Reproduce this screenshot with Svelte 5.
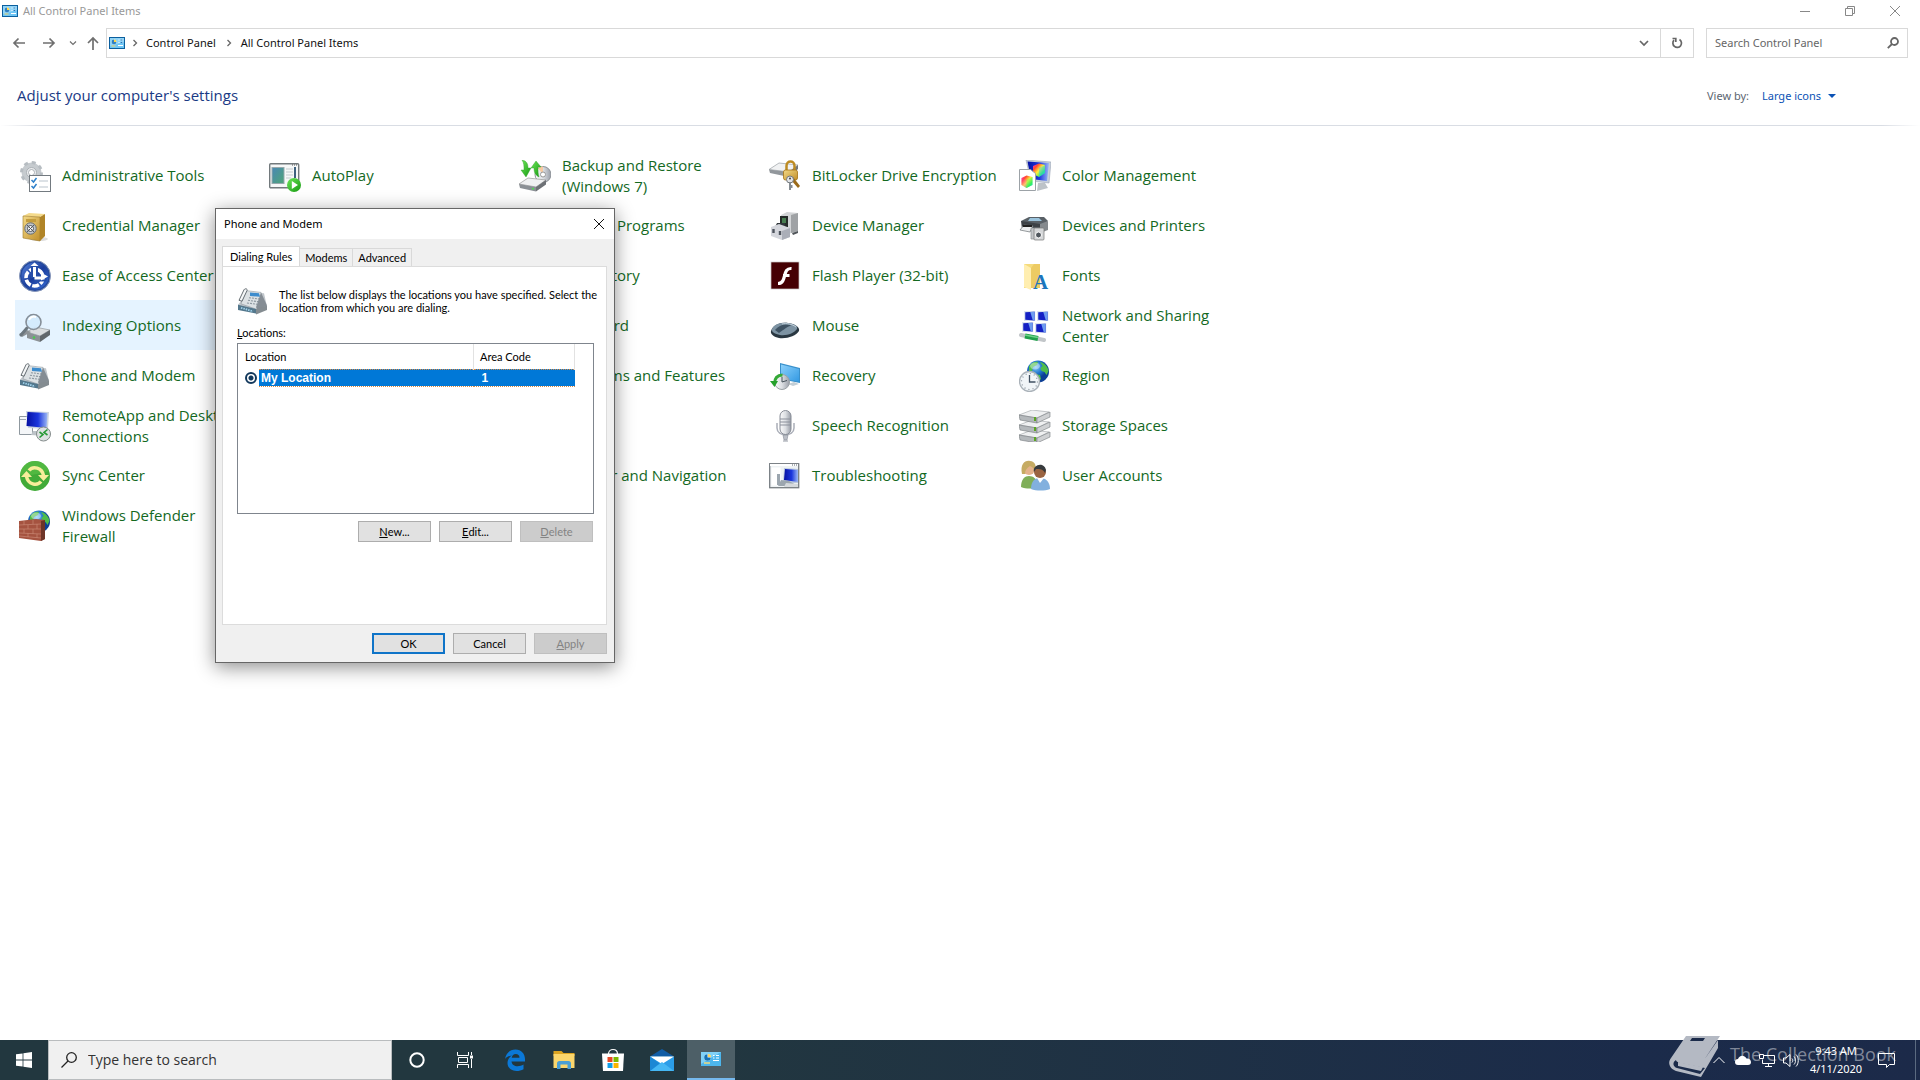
<script>
  const items = [
    ['admin', 'Administrative Tools'], ['autoplay', 'AutoPlay'], ['backup', 'Backup and Restore (Windows 7)'], ['bitlocker', 'BitLocker Drive Encryption'], ['color', 'Color Management'],
    ['safe', 'Credential Manager'], null, ['', 'Default Programs'], ['device', 'Device Manager'], ['printer', 'Devices and Printers'],
    ['ease', 'Ease of Access Center'], null, ['', 'File History'], ['flash', 'Flash Player (32-bit)'], ['fonts', 'Fonts'],
    ['indexing', 'Indexing Options'], null, ['', 'Keyboard'], ['mouse', 'Mouse'], ['network', 'Network and Sharing Center'],
    ['phone', 'Phone and Modem'], null, ['', 'Programs and Features'], ['recovery', 'Recovery'], ['region', 'Region'],
    ['remote', 'RemoteApp and Desktop Connections'], null, null, ['mic', 'Speech Recognition'], ['storage', 'Storage Spaces'],
    ['sync', 'Sync Center'], null, ['', 'Taskbar and Navigation'], ['trouble', 'Troubleshooting'], ['users', 'User Accounts'],
    ['firewall', 'Windows Defender Firewall']
  ];
  const hovered = 'Indexing Options';
</script>

{#snippet panelIcon()}
  <svg class="panel-icon" viewBox="0 0 16 12" aria-hidden="true">
    <rect x=".5" y=".5" width="15" height="11" fill="#6fc6f5" stroke="#0b5f9e" />
    <path d="M1 1h14v4L1 9z" fill="#a5def9" opacity=".6" />
    <circle cx="5" cy="5" r="2.4" fill="#fff" /><path d="M5 5V2.600a2.400 2.400 0 1 0 2.400 2.400z" fill="#2f80c2" /><path d="M5 5V2.600A2.400 2.400 0 0 1 7.400 5z" fill="#ffd54a" />
    <path d="M9.500 3h1M11.500 3h2.500M9.500 5.500h1M11.500 5.500h2.500M9 8.500h5" stroke="#fff" />
    <path d="M11.500 3h2M11.500 5.500h2" stroke="#1f74ba" /><path d="M2.500 9h4" stroke="#f4d269" />
  </svg>
{/snippet}

{#snippet globe()}
  <circle cx="20" cy="11.500" r="11" fill="url(#globe)" />
  <path d="M11 6c3-4 7-5 9-4l-1 3-4 2-1 4-3 1zM22 2c5 1 8 5 8.500 9l-2 4-2-3-3-1-1-3 2-2zM17 14l5 1 1 4-3 3-3-3z" fill="#4fbd4b" />
  <ellipse cx="17" cy="6" rx="5" ry="3.500" fill="#fff" opacity=".4" />
{/snippet}

{#snippet screen()}
  <path d="M0 0h9v8H0z" fill="#dbe3ef" /><path d="M1 1l7.500-.5v7L1 7z" fill="#1420c4" /><path d="M5 .8l3.500-.3v7L7 7.400z" fill="#6e9cf0" />
{/snippet}

{#snippet art(name)}
  <svg class="art" viewBox="0 0 32 32" aria-hidden="true">
    {#if name === 'admin'}
      <circle cx="12.500" cy="12.500" r="7.500" fill="none" stroke="#c6cbcf" stroke-width="5" />
      <circle cx="12.500" cy="12.500" r="10" fill="none" stroke="#b7bdc2" stroke-width="3" stroke-dasharray="3.900 3.950" />
      <circle cx="12.500" cy="12.500" r="5" fill="#eceef0" stroke="#9aa1a6" stroke-width=".8" /><circle cx="12.500" cy="12.500" r="3" fill="#fff" stroke="#9aa1a6" stroke-width=".8" />
      <rect x="10.500" y="15.500" width="21" height="16" fill="#fff" stroke="#737a80" />
      <path d="M12.500 20l2 2 3-4M12.500 26l2 2 3-4" fill="none" stroke="#2e80ca" stroke-width="1.500" />
      <path d="M20 21h9M20 27h9" stroke="#b9c3cc" />
    {:else if name === 'autoplay'}
      <rect x=".7" y="3.700" width="29" height="24" rx="1" fill="#f6f8f8" stroke="#72797c" stroke-width="1.400" />
      <rect x="3" y="7.500" width="12" height="16" fill="url(#photo)" stroke="#97a9ad" />
      <path d="M17 9h7M17 12h7M17 15h7M17 18h5" stroke="#c4cacd" /><path d="M26 7v11" stroke="#3e617e" stroke-width="2" /><path d="M23 5h5" stroke="#555" stroke-dasharray="1 1" />
      <circle cx="25" cy="25" r="7" fill="url(#green)" /><path d="M22.800 21v8l6.200-4z" fill="#fff" />
    {:else if name === 'backup'}
      <circle cx="24" cy="14.500" r="8" fill="url(#metal)" stroke="#8d9297" /><path d="M24 14.500l-5-6.500a8 8 0 0 1 5-1.500z" fill="#f7c9a0" /><circle cx="24" cy="14.500" r="2.500" fill="#fff" stroke="#999" />
      <path d="M0 24l9-6 18 2-10 7z" fill="#f0f1f2" stroke="#999" stroke-width=".7" /><path d="M0 24l17 3v4.500L1 28z" fill="#8b9095" /><path d="M17 27l10-7v4.500l-10 7z" fill="#6e7276" /><circle cx="14" cy="28.800" r="1" fill="#49e34d" />
      <path d="M3 0c5 1 6 4 6 8h3l-5 9-5-7h3c0-4 0-7-2-10z" fill="url(#green)" stroke="#2a9d25" stroke-width=".4" /><path d="M20 17c-4-2-5-5-5-9h-3l5-7 5 6h-3c0 4 0 7 1 10z" fill="url(#green)" stroke="#2a9d25" stroke-width=".4" />
    {:else if name === 'bitlocker'}
      <path d="M0 9.500L10 3l19 2-9 7z" fill="#f1f2f3" stroke="#9a9fa4" stroke-width=".7" /><path d="M0 9.500L20 12v5L1 13z" fill="#92979c" /><path d="M20 12l9-7v4l-9 8z" fill="#72777b" />
      <path d="M17.500 11V6c0-6 8-6 8 0v5" fill="none" stroke="#bd8b22" stroke-width="2.500" />
      <rect x="14.500" y="10" width="14" height="10" rx="2" fill="url(#gold)" stroke="#a67417" stroke-width=".8" />
      <path d="M24 17l7 9-2 2-7-8z" fill="#9b6b1b" /><circle cx="21" cy="19.500" r="3.500" fill="#e3e5e8" stroke="#74797d" /><path d="M21 22v8M22.500 25v3" stroke="#858b91" stroke-width="2" /><circle cx="21" cy="18.500" r="1" fill="#444" />
    {:else if name === 'color'}
      <path d="M7 0l25 2-2 21-18-2z" fill="#c8d0dc" stroke="#9aa5b5" stroke-width=".6" /><path d="M8.500 1.500L30 3l-2 18-16-2z" fill="url(#blue)" />
      <path d="M19 23h7l3 5-11 3z" fill="#bdc3c8" />
      <path d="M14 6l6-2.500L26 5v8l-6 4-6-3z" fill="url(#rainbow)" /><path d="M20 8l6-3v8l-6 4z" fill="#19c7ff" opacity=".4" />
      <path d="M.5 9.500h11l5 4v17H.5z" fill="#fff" stroke="#9ca2a7" /><path d="M2.500 18l5-2.500 6 1.500v8l-6 3-5-3z" fill="url(#rainbow)" /><path d="M2.500 18l5 2v8l-5-3z" fill="#f3f" opacity=".25" /><path d="M7.500 20l6-3v8l-6 3z" fill="#2f6" opacity=".3" />
    {:else if name === 'safe'}
      <ellipse cx="20" cy="29" rx="9" ry="2" fill="#ddd" /><path d="M4 6l6-3 16 1-5 3z" fill="#f4da8b" /><path d="M4 6l17 1v24L4 28z" fill="url(#gold)" stroke="#9c7929" stroke-width=".6" /><path d="M21 7l5-3v22l-5 5z" fill="#b08427" />
      <path d="M7 9h10v3H7z" fill="#c49d3d" /><circle cx="11.500" cy="18.500" r="5.700" fill="#c2c6ca" stroke="#656a6f" /><circle cx="11.500" cy="18.500" r="3" fill="#f4f4f5" stroke="#4d5257" /><path d="M8 22l7-7M8 15l7 7" stroke="#555b60" />
    {:else if name === 'ease'}
      <circle cx="16" cy="16" r="15.500" fill="#23499f" stroke="#8897b8" /><circle cx="16" cy="16" r="13.500" fill="url(#blue2)" />
      <circle cx="15.500" cy="17.500" r="8.500" fill="none" stroke="#fff" stroke-width="3.500" stroke-dasharray="7 1.600" />
      <path d="M15.500 18V6M15.500 18h12" stroke="#264ea9" stroke-width="7" /><path d="M15.500 17V7M15.500 18h10" stroke="#fff" stroke-width="3" /><path d="M22 12.500v8l7-4z" fill="#fff" /><path d="M11.500 6h8l-4-3.500z" fill="#fff" />
    {:else if name === 'flash'}
      <rect x="2" y="2" width="28" height="27" fill="#450003" stroke="#c9c9c9" stroke-width=".7" /><path d="M22.500 8.500c-7-.5-6 7-8.500 12-1 2-3 3-5 3M14 15.500h6.500" fill="none" stroke="#fff" stroke-width="3.200" />
    {:else if name === 'device'}
      <path d="M12 5l6-3 11 1v18l-10 3-8-3z" fill="#d2d4d6" /><path d="M22 5l7-2v18l-7 2z" fill="#9fa2a5" /><path d="M11 6h8v11h-8z" fill="#242b28" /><rect x="13" y="8" width="4" height="5" fill="#477d50" /><path d="M8 13h8v4H6z" fill="#30363b" />
      <path d="M2 17l8-3 11 4v9l-8 3-11-4z" fill="#d4d6dc" /><path d="M13 21l8-3v9l-8 3z" fill="#aaaeb8" /><path d="M4.500 19v4M11 21v4" stroke="#4d535c" stroke-width="2.400" /><path d="M23 23l6-2v2l-5 2z" fill="#50555a" />
    {:else if name === 'printer'}
      <path d="M2 11l8-4h15l4 4-5 4H5z" fill="#596066" /><path d="M11 8h9l3 3H9z" fill="#9bc4dd" /><path d="M2 11l19 3v9L3 19z" fill="#3d4247" /><path d="M21 14l8-3v9l-8 3z" fill="#858a8e" />
      <path d="M5 15l9 1-3 6-10-2z" fill="#eceeef" stroke="#6d7276" stroke-width=".7" /><path d="M4 16h9" stroke="#222" stroke-width="2" />
      <path d="M12 18h9v11h-9z" fill="#c3c6c9" stroke="#8a8f93" stroke-width=".7" /><rect x="15" y="18" width="10" height="12" rx="1" fill="#d5d7d9" stroke="#777" stroke-width=".7" /><circle cx="19.500" cy="25" r="3" fill="#50575e" stroke="#fff" />
    {:else if name === 'fonts'}
      <path d="M5 4h16v24H5z" fill="#f5db7c" /><path d="M5 4l7 4v22l-7-3z" fill="#ffeeb0" /><path d="M12 8l3-4h6v24h-9z" fill="#edcb63" />
      <text x="14" y="29" font-family="Liberation Serif, serif" font-size="21" font-weight="700" fill="#1c76bd">A</text>
    {:else if name === 'indexing'}
      <path d="M8 22l8-5 15 3-10 6z" fill="#dadddf" stroke="#888d91" stroke-width=".6" /><path d="M8 22l13 4v6L8 28z" fill="#8c9296" /><path d="M21 26l10-6v5l-10 7z" fill="#61676b" /><circle cx="15" cy="27.500" r="1.200" fill="#47ce4c" /><path d="M0 24l8-4 4 2-9 5z" fill="#8d9296" />
      <path d="M8 18l-6 7" stroke="#6c777f" stroke-width="3" stroke-linecap="round" /><circle cx="14.500" cy="12" r="7.500" fill="#d2eafd" fill-opacity=".9" stroke="#858e98" stroke-width="1.600" /><path d="M10 10c1-3 4-4 7-3" fill="none" stroke="#fff" stroke-width="2" />
    {:else if name === 'mouse'}
      <path d="M2 21c2-6 9-9 17-8 7 1 12 4 11 8-3 5-12 8-20 7-5-1-9-4-8-7z" fill="#293741" /><path d="M3 19c2-5 9-7 16-6 7 1 10 3 9 6-3 4-10 7-17 6-5-1-9-3-8-6z" fill="#7d93a3" /><path d="M6 20c4-5 11-7 17-4-3-1-8 4-13 7z" fill="#3f5363" /><path d="M13 14c5-1 10 0 14 3" stroke="#c4d2dc" fill="none" />
    {:else if name === 'network'}
      <g transform="translate(5 1) scale(1.250)">{@render screen()}</g><g transform="translate(18 1) scale(1.250)">{@render screen()}</g><g transform="translate(3 12) scale(1.250)">{@render screen()}</g><g transform="translate(16 13) scale(1.250)">{@render screen()}</g>
      <path d="M2 25l23 5" stroke="#c2c6c9" stroke-width="4" stroke-linecap="round" /><path d="M6 26l13 2.500" stroke="#1fa04a" stroke-width="5" /><path d="M6 25l13 2.500" stroke="#6ed487" stroke-width="1.500" />
    {:else if name === 'phone'}
      <g transform="translate(0 3) scale(1 .88)">
        <path d="M1 19L11 5l16 1 3 15-11 7-17-4z" fill="#bfc5ca" /><path d="M9 3l15 2 2 15-7 4-15-6z" fill="#dce1e4" stroke="#8f989f" stroke-width=".6" /><path d="M24 5l6 15-9 5-2-3z" fill="#858d94" />
        <path d="M1 19l18 5v5L1 25z" fill="#53778c" /><path d="M19 24l11-4v5l-11 5z" fill="#848c91" /><path d="M13 5l9 1 1 4-10-1z" fill="#3d8ccd" /><path d="M12 11l10 1.500M11 14l10 1.500M10 17l10 1.500" stroke="#8a959d" stroke-width="1.200" stroke-dasharray="2 1" />
        <path d="M2 14L7 2c1-2 4-1 3 1L5 15z" fill="#f5f7f8" stroke="#4b5359" stroke-width=".9" /><path d="M4 22.500l12 4" stroke="#a1d3ed" stroke-width="2" stroke-dasharray="1.500 1" />
      </g>
    {:else if name === 'recovery'}
      <path d="M11 3l20 5v15l-20-4z" fill="#3990cb" /><path d="M12 4.500L30 9v12.500l-18-3z" fill="url(#sky)" /><path d="M19 24l6-2 5 2-6 2z" fill="#c2ced6" />
      <circle cx="13" cy="22" r="7.500" fill="url(#metal)" stroke="#9ba2a6" /><path d="M13 17v5l5-1.500" fill="none" stroke="#445058" /><path d="M5.500 24c0-6 3-9 8-9" fill="none" stroke="#35a937" stroke-width="3" /><path d="M1 21h8l-3.500 6z" fill="#26a12c" />
    {:else if name === 'region'}
      <g transform="translate(-1 0)">{@render globe()}</g><circle cx="10.500" cy="21.500" r="10" fill="#f1f5f8" stroke="#aab2b9" stroke-width="1.300" /><circle cx="10.500" cy="21.500" r="8" fill="none" stroke="#858f98" stroke-width="1.200" stroke-dasharray="1 3.190" /><path d="M10.500 15v7h6" fill="none" stroke="#405061" stroke-width="1.300" />
    {:else if name === 'remote'}
      <path d="M.5 6.500h13v18H.5z" fill="#f4f6f8" stroke="#8f989f" /><path d="M1 9.500h6" stroke="#9ea8b2" />
      <path d="M7 1l23 1-1 17-20-1z" fill="#cbd4df" /><path d="M8.500 2l20 1-1 15-20-2z" fill="url(#blue)" /><path d="M14 21h9l3 5-14-1z" fill="#bdc3c8" />
      <circle cx="24.500" cy="24" r="7" fill="#dde2e2" stroke="#848b8b" /><path d="M20.500 22l3.500 2.500-3.500 3M28.500 19.500L25 22.500l3.500 2.500" fill="none" stroke="#279936" stroke-width="1.600" />
    {:else if name === 'mic'}
      <path d="M8 13v5c0 9 17 9 17 0v-5" fill="none" stroke="#aaaeb8" stroke-width="1.500" /><rect x="11" y=".5" width="11" height="24" rx="5.500" fill="url(#metal)" stroke="#888d97" /><path d="M11 9h11M11 12h11M11 15h11" stroke="#8b909b" /><path d="M14 25l1 5h3l1-5z" fill="#bbbfc7" stroke="#858a95" stroke-width=".6" /><path d="M14 31h5" stroke="#969ba5" />
    {:else if name === 'storage'}
      {#each [22, 12, 2] as y}
        <path d="M0 {y + 3}l13-5 17 2-12 6z" fill="#eff0f1" stroke="#9b9fa3" stroke-width=".6" /><path d="M0 {y + 3}l18 3v5L1 {y + 8}z" fill="#b4b8bb" stroke="#777c80" stroke-width=".6" /><path d="M18 {y + 6}l13-6v5l-13 6z" fill="#cfd1d3" stroke="#777c80" stroke-width=".6" /><rect x="15" y={y + 5} width="2" height="4" fill="#5ba621" />
      {/each}
    {:else if name === 'sync'}
      <circle cx="16" cy="16" r="15" fill="#41ab38" /><path d="M16 1a15 15 0 0 1 14 10C20 14 10 16 1 15A15 15 0 0 1 16 1z" fill="#5cc247" opacity=".6" />
      <path d="M10 10.500c4-5 13-3 14.500 5M22 21.500c-4 5-13 3-14.500-5" fill="none" stroke="#f7ed9a" stroke-width="3.500" />
      <path d="M2 17h11l-5.500-6zM19 15h11l-5.500 6z" fill="#f7ed9a" />
    {:else if name === 'trouble'}
      <rect x=".7" y="3.700" width="29" height="24" fill="#eef2f4" stroke="#777d82" stroke-width="1.300" /><path d="M1 5h28" stroke="#fff" stroke-width="2" /><path d="M23 5h6" stroke="#59636a" stroke-dasharray="1 1" /><rect x="2.500" y="7.500" width="9" height="18" fill="#fff" />
      <path d="M15 8l14 1v14H14z" fill="#b9c7dd" /><path d="M16 9l13 1v12l-14-2z" fill="url(#blue)" /><path d="M8 14h3v11H8zM12 20l8 1 9 5H9z" fill="#9ca6af" /><path d="M17 23l12 1v3H15z" fill="#d5d9dc" />
    {:else if name === 'users'}
      <path d="M2 27c0-8 4-11 8-11s9 3 9 11c-5 2-12 2-17 0z" fill="#7fae58" /><circle cx="10" cy="9" r="6" fill="#e4b28b" /><path d="M3 14C1 4 6 0 11 1c5 0 7 5 5 11-1-3-2-5-5-6-3 2-5 4-5 8z" fill="#c6ab63" />
      <path d="M12 29c0-8 4-11 9-11s10 3 10 11c-5 2-14 2-19 0z" fill="#82b0de" /><path d="M18 18l3 5 4-5z" fill="#fff" /><circle cx="21" cy="12" r="6" fill="#9a6442" /><path d="M15 12c-2-7 10-11 12-2l-1 3c-2-4-5-4-9-4z" fill="#373a3d" />
    {:else if name === 'firewall'}
      {@render globe()}<path d="M0 11l17-2 9 1v19l-4 2L0 28z" fill="#a55340" /><path d="M22 11l4-1v19l-4 2z" fill="#6e3528" /><path d="M0 15l22-1M0 19h22M0 23l22 1M0 26l22 2M5 11v4M14 10v4M9 15v4M18 14v5M5 19v4M14 19v5M9 23v4M18 24v4" stroke="#c98774" stroke-width=".7" />
    {/if}
  </svg>
{/snippet}

<svg class="defs" aria-hidden="true">
  <defs>
    <linearGradient id="green" x2="1" y2="1"><stop stop-color="#6ee55a" /><stop offset="1" stop-color="#14990f" /></linearGradient>
    <linearGradient id="gold" x2="1" y2="1"><stop stop-color="#f3d986" /><stop offset="1" stop-color="#c18f2b" /></linearGradient>
    <linearGradient id="metal" x2="1"><stop stop-color="#fafafb" /><stop offset=".5" stop-color="#dcdfe3" /><stop offset="1" stop-color="#989da7" /></linearGradient>
    <linearGradient id="photo" y2="1"><stop stop-color="#4a87b5" /><stop offset="1" stop-color="#4ea577" /></linearGradient>
    <linearGradient id="blue" x2="1"><stop stop-color="#0510a2" /><stop offset=".55" stop-color="#1c37dd" /><stop offset="1" stop-color="#9db9f5" /></linearGradient>
    <linearGradient id="blue2" y2="1"><stop stop-color="#5683dc" /><stop offset=".5" stop-color="#1a3d9c" /><stop offset="1" stop-color="#3a6fd6" /></linearGradient>
    <linearGradient id="sky" x2="1" y2="1"><stop stop-color="#8bd0fb" /><stop offset="1" stop-color="#349ae3" /></linearGradient>
    <linearGradient id="rainbow" x2="1" y2="1"><stop stop-color="#ff2bd0" /><stop offset=".25" stop-color="#ff4b30" /><stop offset=".5" stop-color="#fff23c" /><stop offset=".75" stop-color="#3be95d" /><stop offset="1" stop-color="#21c6ff" /></linearGradient>
    <radialGradient id="globe" cx=".4" cy=".3"><stop stop-color="#82c9f7" /><stop offset=".6" stop-color="#1f74cd" /><stop offset="1" stop-color="#0d3f95" /></radialGradient>
  </defs>
</svg>

<div class="desktop">
  <header class="titlebar">
    {@render panelIcon()}
    <span class="title">All Control Panel Items</span>
    <button class="win" aria-label="Minimize"><svg viewBox="0 0 12 12"><path d="M1 6.500h10" /></svg></button>
    <button class="win" aria-label="Restore"><svg viewBox="0 0 12 12"><path d="M1.500 3.500h7v7h-7zM3.500 3V1.500h7v7H9" /></svg></button>
    <button class="win" aria-label="Close"><svg viewBox="0 0 12 12"><path d="M1 1l10 10M11 1L1 11" /></svg></button>
  </header>

  <nav class="toolbar" aria-label="Navigation">
    <button class="nav" aria-label="Back"><svg viewBox="0 0 12 12"><path d="M12 6H1M5.500 1.500L1 6l4.500 4.500" /></svg></button>
    <button class="nav" aria-label="Forward"><svg viewBox="0 0 12 12"><path d="M0 6h11M6.500 1.500L11 6l-4.500 4.500" /></svg></button>
    <button class="nav recent" aria-label="Recent locations"><svg viewBox="0 0 12 12"><path d="M3 4.500l3 3 3-3" /></svg></button>
    <button class="nav up" aria-label="Up"><svg viewBox="0 0 12 12"><path d="M6 13V1M1 6l5-5 5 5" /></svg></button>
    <div class="address">
      {@render panelIcon()}
      <svg class="sep" viewBox="0 0 6 8"><path d="M1.500 1l3 3-3 3" /></svg>
      <a href="#control-panel">Control Panel</a>
      <svg class="sep" viewBox="0 0 6 8"><path d="M1.500 1l3 3-3 3" /></svg>
      <a href="#all-items">All Control Panel Items</a>
      <button class="drop" aria-label="Previous locations"><svg viewBox="0 0 12 12"><path d="M2 4l4 4 4-4" /></svg></button>
      <button class="refresh" aria-label="Refresh"><svg viewBox="0 0 12 12"><path d="M8.500 2.500A4.300 4.300 0 1 1 3 3.200M1.500 1.500h3.300v3.500" /></svg></button>
    </div>
    <div class="search">
      <input type="search" aria-label="Search Control Panel" placeholder="Search Control Panel" />
      <svg viewBox="0 0 12 12" aria-hidden="true"><circle cx="7.500" cy="4.500" r="3.500" /><path d="M5 7L.8 11.200" /></svg>
    </div>
  </nav>

  <main>
    <div class="heading">
      <h1>Adjust your computer's settings</h1>
      <label for="view-by">View by:</label>
      <div class="view">
        <select id="view-by"><option>Large icons</option></select>
        <svg viewBox="0 0 8 4" aria-hidden="true"><path d="M0 0h8L4 4z" /></svg>
      </div>
    </div>
    <div class="rule"></div>
    <div class="items">
      {#each items as item}
        {#if item}
          <a class="item" class:hovered={item[1] === hovered} href="#item">
            {@render art(item[0])}
            <span>{item[1]}</span>
          </a>
        {:else}
          <div></div>
        {/if}
      {/each}
    </div>
  </main>

  <footer class="taskbar">
    <button class="start" aria-label="Start"><svg viewBox="0 0 16 16"><path d="M0 2.300L6.600 1.400v6.200H0zM7.400 1.300L16 0v7.600H7.400zM0 8.400h6.600v6.200L0 13.700zM7.400 8.400H16V16l-8.600-1.200z" fill="#fff" /></svg></button>
    <div class="tasksearch">
      <svg viewBox="0 0 16 16" aria-hidden="true"><circle cx="10.500" cy="5.500" r="4.800" /><path d="M7 9L.5 15.500" /></svg>
      <input type="text" aria-label="Type here to search" placeholder="Type here to search" />
    </div>
    <div class="apps">
      <button aria-label="Cortana"><svg viewBox="0 0 24 24"><circle cx="12" cy="12" r="6.700" fill="none" stroke="#fff" stroke-width="2" /></svg></button>
      <button aria-label="Task View"><svg viewBox="0 0 24 24"><path d="M3.500 4v3.500h11V4M3.500 20v-3.500h11V20M4.500 9.500h9v5h-9zM17.500 4v3M17.500 11v9" fill="none" stroke="#fff" /><path d="M16 7.500h3v3h-3z" fill="#fff" /></svg></button>
      <button aria-label="Edge"><svg viewBox="0 0 24 24"><path d="M2 11C3 5 7 1.500 12.500 1.500c6 0 9.500 4.500 9.500 9.500v2.500H8.500c.3 3.200 3 4.700 6 4.700 2.300 0 4.300-.6 6-1.700v4.700c-2 1.200-4.500 1.800-7 1.800C8 23 4.500 19.500 4.500 15c0-3.500 1.800-6 4.500-7.500-3 .3-5.500 1.500-7 3.500zM8.700 9.700h7.800c0-2.500-1.500-3.700-3.700-3.700-2.300 0-3.700 1.600-4.100 3.700z" fill="#0b78d7" /></svg></button>
      <button aria-label="File Explorer"><svg viewBox="0 0 24 24"><path d="M1.500 3h8l2 2h11v3h-21z" fill="#dca421" /><path d="M1.500 6h21v14h-21z" fill="#fbd66c" /><path d="M5 21v-5.500c0-1.400.8-2.500 2.500-2.500h9c1.700 0 2.500 1.100 2.500 2.500V21h-3.500v-4.500h-7V21z" fill="#4a9fd4" /></svg></button>
      <button aria-label="Microsoft Store"><svg viewBox="0 0 24 24"><path d="M7.500 6c0-6 9-6 9 0" fill="none" stroke="#fff" stroke-width="1.200" /><path d="M1 5.500h22l-1 17.500H2z" fill="#fff" /><path d="M6.500 9h5v5h-5z" fill="#e74825" /><path d="M12.500 9h5v5h-5z" fill="#7eb900" /><path d="M6.500 15h5v5h-5z" fill="#129ee8" /><path d="M12.500 15h5v5h-5z" fill="#fbb400" /></svg></button>
      <button aria-label="Mail"><svg viewBox="0 0 24 24"><path d="M0 8.500L12 1l12 7.500z" fill="#105ca5" /><path d="M0 8.500h24v14.500H0z" fill="#2b9de8" /><path d="M0 8.500h24L12 16z" fill="#fff" /><path d="M0 23l12-9 12 9z" fill="#45b7f4" /><path d="M0 8.500L9.500 15.500 0 23z" fill="#1c87d4" /></svg></button>
      <button class="active" aria-label="Control Panel"><svg viewBox="0 0 24 24"><rect x="2" y="5" width="20" height="14" fill="#4db6ec" /><path d="M2 5h20L2 17z" fill="#81d1f6" /><circle cx="8.500" cy="10.500" r="3.300" fill="#fff" /><path d="M8.500 10.500V7.200a3.300 3.300 0 1 0 3.300 3.300z" fill="#1671b4" /><path d="M9 10V7a3 3 0 0 1 3 3z" fill="#ffd75a" /><path d="M14 8.500h1.500M17 8.500h3M14 11h1.500M17 11h3M14 13.500h6" stroke="#fff" /><path d="M5 16h6" stroke="#f1da7e" stroke-width="1.500" /></svg></button>
    </div>
    <div class="tray">
      <button aria-label="Show hidden icons"><svg viewBox="0 0 16 16"><path d="M2.500 11L8 5.500l5.500 5.500" /></svg></button>
      <button aria-label="OneDrive"><svg viewBox="0 0 16 16"><path d="M3 13a3 3 0 0 1 0-6c1-3.500 6-5 8.500-.5C14 6 16 8 16 10s-1 3-3 3z" fill="#fff" stroke="none" /></svg></button>
      <button aria-label="Network"><svg viewBox="0 0 16 16"><path d="M4.500 3.500h11v8h-12v-4M.5 2.500h4v4h-4zM9.500 11.500v3M6 14.500h7" /></svg></button>
      <button aria-label="Volume"><svg viewBox="0 0 16 16"><path d="M.5 6v5h2.500l4 3.500v-12L3 6zM9 6.500c1 1 1 3 0 4M11 4.500c2 2 2 6 0 8M13 2.500c3 3 3 9 0 12" /></svg></button>
      <time datetime="2020-04-11T09:43">9:43 AM<br />4/11/2020</time>
      <button class="notify" aria-label="Notifications"><svg viewBox="0 0 18 18"><path d="M.5 2.500h16v11h-5l-3 3v-3h-8z" /></svg></button>
    </div>
    <div class="watermark">
      <svg viewBox="0 0 52 44" aria-hidden="true"><path d="M21 0h31L36 24 8 20zM10 19l26 5L50 4v8L33 41 8 35c-6-2-9-8-5-13L18 0h6z" /><path d="M8 24c-4 2-3 7 1 8l23 6 5-6-25-5c-3-1-4-2-4-3z" class="label" /><path d="M10 26l25 5-2 4-23-5z" /><path class="label" d="M24 2h13l-2 3H22z" /></svg>
      <span>The Collection Book</span>
    </div>
  </footer>

  <section class="dialog" role="dialog" aria-labelledby="dialog-title">
    <div class="dialog-title">
      <h2 id="dialog-title">Phone and Modem</h2>
      <button aria-label="Close dialog"><svg viewBox="0 0 12 12"><path d="M1 1l10 10M11 1L1 11" /></svg></button>
    </div>
    <div class="tabs" role="tablist">
      <button role="tab" aria-selected="true" class="selected">Dialing Rules</button>
      <button role="tab" aria-selected="false">Modems</button>
      <button role="tab" aria-selected="false">Advanced</button>
    </div>
    <div class="panel">
      <div class="intro">
        {@render art('phone')}
        <p>The list below displays the locations you have specified. Select the location from which you are dialing.</p>
      </div>
      <p class="caption"><u>L</u>ocations:</p>
      <div class="list">
        <table>
          <colgroup><col class="pick-col" /><col /><col class="code-col" /></colgroup>
          <thead><tr><th colspan="2">Location</th><th class="code">Area Code</th></tr></thead>
          <tbody><tr><td class="pick"><input type="radio" name="location" aria-label="My Location" checked /></td><td class="name">My Location</td><td class="code">1</td></tr></tbody>
        </table>
      </div>
      <div class="buttons">
        <button><u>N</u>ew...</button>
        <button><u>E</u>dit...</button>
        <button disabled><u>D</u>elete</button>
      </div>
    </div>
    <div class="buttons">
      <button class="default">OK</button>
      <button>Cancel</button>
      <button disabled><u>A</u>pply</button>
    </div>
  </section>
</div>

<style>
  :global(body) { margin: 0; background: #fff; }
  .desktop, .desktop * { box-sizing: border-box; }
  .desktop { position: relative; display: flex; flex-direction: column; min-height: 100vh; overflow: hidden; font: 11px/16px "Noto Sans", "Open Sans", sans-serif; color: #222; }
  .defs { position: absolute; width: 0; height: 0; }
  svg { display: block; flex: none; }
  button { display: flex; align-items: center; justify-content: center; margin: 0; padding: 0; border: 0; background: none; font: inherit; color: inherit; }
  a { color: inherit; text-decoration: none; }
  h1, h2, p { margin: 0; font-weight: 400; }
  input, select { margin: 0; padding: 0; border: 0; outline: 0; background: none; font: inherit; color: inherit; appearance: none; }
  .panel-icon { width: 16px; height: 12px; }

  .titlebar { display: flex; align-items: center; height: 22px; padding: 0 3px 0 2px; color: #999; }
  .title { flex: 1; margin-left: 5px; }
  .win { width: 45px; height: 22px; }
  .win svg { width: 12px; height: 12px; fill: none; stroke: #888; }

  .toolbar { display: flex; align-items: center; height: 42px; padding: 0 12px 0 4px; }
  .nav { width: 30px; height: 30px; }
  .nav svg { width: 12px; height: 12px; overflow: visible; fill: none; stroke: #6f6f6f; stroke-width: 1.7; }
  .nav.recent { width: 18px; }
  .nav.recent svg { stroke-width: 1.2; }
  .nav.up { width: 22px; }
  .address { display: flex; flex: 1; align-items: center; height: 30px; margin-left: 2px; padding-left: 2px; border: 1px solid #d9d9d9; color: #111; }
  .sep { width: 6px; height: 8px; margin: 0 8px 0 7px; fill: none; stroke: #666; stroke-width: 1.300; }
  a + .sep { margin: 0 9px 0 10px; }
  .drop { width: 32px; height: 28px; margin-left: auto; }
  .refresh { width: 33px; height: 28px; border-left: 1px solid #d9d9d9; }
  .drop svg, .refresh svg { width: 12px; height: 12px; fill: none; stroke: #666; stroke-width: 1.700; }
  .search { display: flex; align-items: center; width: 202px; height: 30px; margin-left: 12px; padding: 0 8px; border: 1px solid #d9d9d9; }
  .search input { flex: 1; min-width: 0; }
  .search svg { width: 12px; height: 12px; fill: none; stroke: #666; stroke-width: 1.800; }
  input::placeholder { color: #666; opacity: 1; }

  main { flex: 1; }
  .heading { display: flex; align-items: center; height: 61px; padding: 0 84px 0 17px; color: #5b6570; }
  .heading label, .view { padding-top: 3px; }
  h1 { flex: 1; font-family: "Open Sans", "Noto Sans", sans-serif; font-size: 15px; line-height: 20px; color: #1a3a85; }
  .view { display: flex; align-items: center; margin-left: 13px; color: #0b52b5; }
  .view select { width: 66px; }
  .view svg { width: 8px; height: 4px; fill: #0b52b5; }
  .rule { height: 1px; background: linear-gradient(90deg, #fff, #d9dde4 2%, #d9dde4 98%, #fff); }
  .items { display: grid; grid-template-columns: repeat(5, minmax(0, 250px)); grid-auto-rows: 50px; padding: 24px 15px; }
  .item { display: flex; align-items: center; gap: 11px; padding: 2px 14px 0 4px; font-family: "Open Sans", "Noto Sans", sans-serif; font-size: 15px; line-height: 21px; color: #14691f; }
  .item span { padding-bottom: 1px; }
  .item.hovered { background: #e5f3ff; }
  .art { width: 32px; height: 32px; }

  .dialog { position: absolute; left: 215px; top: 208px; width: 400px; border: 1px solid #666; padding-bottom: 8px; background: #f0f0f0; box-shadow: 0 4px 18px rgb(0 0 0 / 45%); font: 11px/13px Lato, "Liberation Sans", sans-serif; color: #000; }
  .dialog-title { display: flex; align-items: center; height: 30px; padding: 0 8px; background: #fff; font: 11px/16px "Noto Sans", "Open Sans", sans-serif; }
  .dialog-title h2 { flex: 1; font-size: 11px; }
  .dialog-title button { width: 14px; height: 22px; }
  .dialog-title svg { width: 12px; height: 12px; fill: none; stroke: #111; }
  .tabs { display: flex; align-items: flex-end; height: 27px; padding: 0 6px; }
  .tabs button { height: 18px; padding: 0 5px; border: 1px solid #d9d9d9; border-width: 1px 1px 0 0; }
  .tabs .selected { height: 20px; padding: 0 7px 1px; border-left-width: 1px; background: #fff; }
  .panel { height: 359px; margin: 0 7px 0 6px; padding: 15px 12px 0 14px; border: 1px solid #dcdcdc; background: #fff; }
  .intro { display: flex; align-items: center; gap: 10px; height: 37px; margin-right: -8px; }
  .intro p { flex: 1; }
  .caption { margin: 7px 0 4px; }
  .list { height: 171px; border: 1px solid #7f858d; }
  table { width: 337px; border-collapse: collapse; table-layout: fixed; }
  .pick-col { width: 21px; }
  .code-col { width: 101px; }
  th { height: 25px; padding: 1px 0 0 7px; border-right: 1px solid #e2e2e2; font-weight: 400; text-align: left; }
  th.code { padding-left: 6px; }
  td { height: 17px; padding: 1px 0 0; background: #0078d7; border: 1px dotted #d98b45; border-width: 1px 0; color: #fff; font: 700 12px/13px "Liberation Sans", Arial, sans-serif; }
  td.pick { padding: 0 0 0 7px; border: 0; background: none; }
  td.name { padding-left: 2px; }
  td.code { padding-left: 8px; }
  .pick input { display: block; width: 12px; height: 12px; border: 2px solid #12385c; border-radius: 50%; background: radial-gradient(circle, #12385c 2px, #fff 3px); }
  .buttons { display: flex; justify-content: flex-end; gap: 8px; margin-top: 7px; }
  .buttons button { width: 73px; height: 21px; border: 1px solid #adadad; background: #e1e1e1; }
  .buttons button:disabled { border-color: #bfbfbf; background: #ccc; color: #838383; }
  .buttons .default { border: 2px solid #0f74c8; }
  .panel > .buttons { padding-right: 1px; }
  .dialog > .buttons { margin-top: 8px; padding-right: 7px; }

  .taskbar { position: relative; display: flex; height: 40px; background: linear-gradient(90deg, #22373f, #22373f 35%, #1b2b4a 85%, #1c2a49); color: #fff; }
  .start { width: 48px; }
  .start svg { width: 16px; height: 16px; }
  .tasksearch { display: flex; align-items: center; gap: 11px; width: 344px; padding: 0 12px; border: 1px solid #b9bcbe; background: #f0f0f0; color: #333; }
  .tasksearch svg { width: 16px; height: 16px; fill: none; stroke: #222; stroke-width: 1.300; }
  .tasksearch input { flex: 1; min-width: 0; font-family: "Open Sans", "Noto Sans", sans-serif; font-size: 14px; line-height: 20px; }
  .tasksearch input::placeholder { color: #333; }
  .apps { display: flex; gap: 1px; padding-left: 1px; }
  .apps button { width: 48px; height: 40px; }
  .apps svg { width: 24px; height: 24px; }
  .apps .active { background: #4d5f67; border-bottom: 2px solid #76b9ed; }
  .tray { display: flex; align-items: center; margin-left: auto; margin-right: 4px; padding-right: 19px; border-right: 1px solid #5b6a80; }
  .tray button { width: 24px; height: 40px; }
  .tray svg { width: 16px; height: 16px; fill: none; stroke: #fff; }
  .tray time { width: 66px; text-align: center; line-height: 18px; }
  .tray .notify { width: 18px; margin-left: 9px; }
  .tray .notify svg { width: 18px; height: 18px; }
  .watermark { position: absolute; right: 24px; bottom: 0; display: flex; align-items: center; gap: 10px; height: 44px; color: rgb(255 255 255 / 45%); pointer-events: none; }
  .watermark svg { width: 52px; height: 44px; fill: #b4b9c3; }
  .watermark .label { fill: #1b2b4a; }
  .watermark span { padding-bottom: 8px; font-family: "Open Sans", "Noto Sans", sans-serif; font-size: 18px; line-height: 20px; }
</style>
